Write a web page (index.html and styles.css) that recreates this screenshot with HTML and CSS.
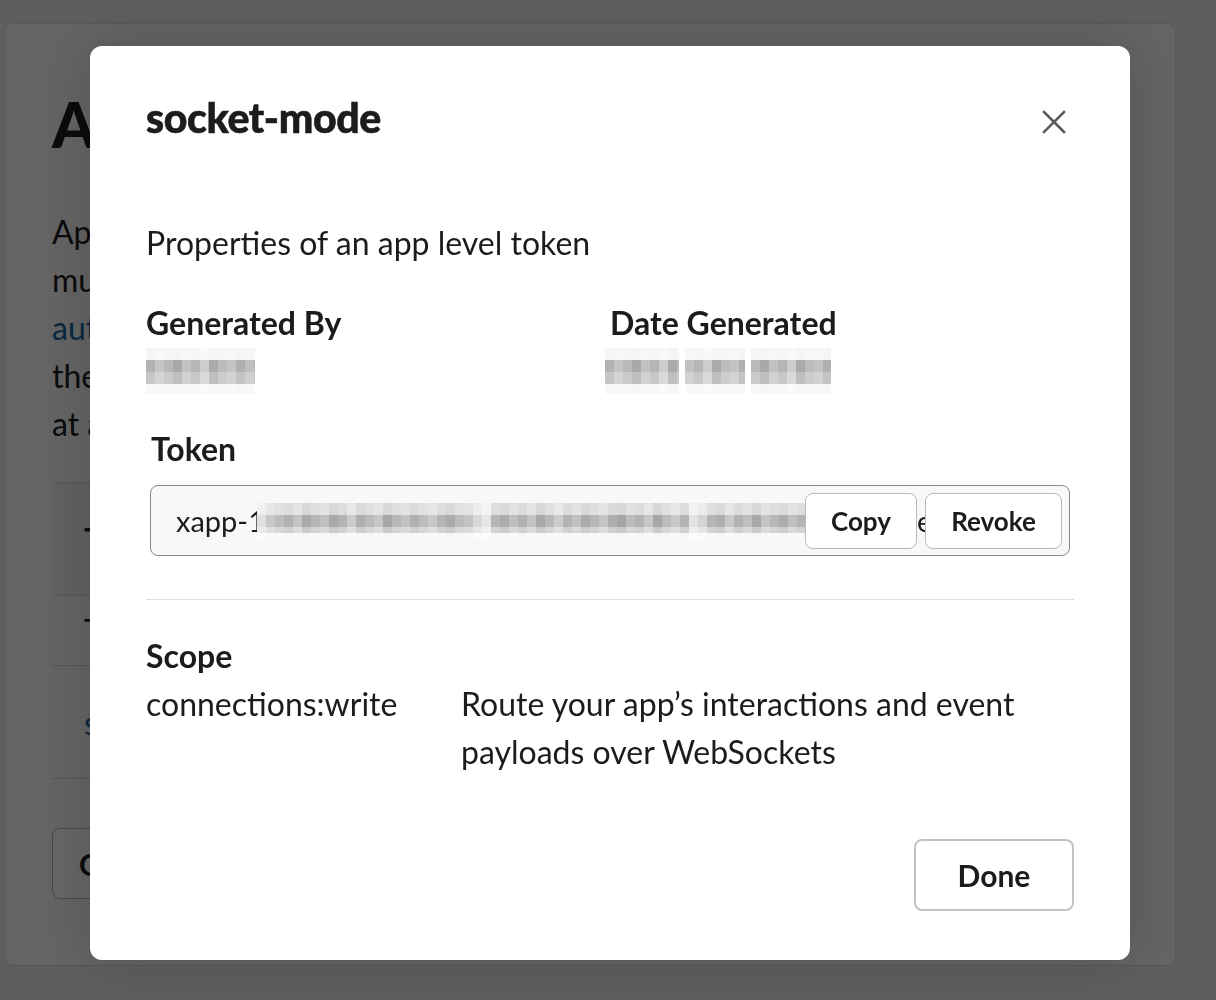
FILE: index.html
```html
<!DOCTYPE html>
<html>
<head>
<meta charset="utf-8">
<link rel="stylesheet" href="styles.css">
</head>
<body>
<div class="page">
  <main class="card">
    <h1 class="page-title">App-Level Tokens</h1>
    <p class="intro">App-level tokens represent your app across<br>multiple workspaces and users. Use them with<br><a href="#">authorized APIs</a> such as Socket Mode and<br>them secret. You can regenerate or revoke<br>at any time from this page.</p>
    <div class="table">
      <div class="row row-head"><span class="cell-strong">Token Name</span></div>
      <div class="row row-mid"><span>Tokens</span></div>
      <div class="row row-link"><a href="#">socket-mode</a></div>
    </div>
    <button class="ghost-btn">Generate Token and Scopes</button>
  </main>
</div>

<div class="overlay">
  <section class="modal">
    <header class="modal-header">
      <h2 class="modal-title">socket-mode</h2>
      <button class="close" aria-label="Close">
        <svg width="24" height="24" viewBox="0 0 24 24"><path d="M2 2 L22 22 M22 2 L2 22" stroke="#5b5b5b" stroke-width="2.6" stroke-linecap="square" fill="none"/></svg>
      </button>
    </header>

    <p class="lead">Properties of an app level token</p>

    <div class="meta">
      <div class="meta-item">
        <div class="label">Generated By</div>
        <div class="blur blur-name"></div>
      </div>
      <div class="meta-item">
        <div class="label">Date Generated</div>
        <div class="blur-date">
          <span class="blur blur-d1"></span><span class="blur blur-d2"></span><span class="blur blur-d3"></span>
        </div>
      </div>
    </div>

    <div class="label token-label">Token</div>
    <div class="token-field">
      <div class="token-text"><span>xapp-1</span><span class="blur-token"></span><span class="token-tail">e</span></div>
      <div class="token-actions">
        <button class="small-btn copy">Copy</button>
        <button class="small-btn revoke">Revoke</button>
      </div>
    </div>

    <hr class="divider">

    <div class="label scope-label">Scope</div>
    <div class="scope-row">
      <div class="scope-name">connections:write</div>
      <div class="scope-desc">Route your app’s interactions and event payloads over WebSockets</div>
    </div>

    <footer class="modal-footer">
      <button class="done">Done</button>
    </footer>
  </section>
</div>
</body>
</html>
```

FILE: styles.css
```css
* { box-sizing: border-box; }
html, body { margin: 0; padding: 0; }
body {
  background: #ebebeb;
  font-family: Lato, "Noto Sans", sans-serif;
  color: #1d1c1d;
  width: 1216px;
  height: 1000px;
  overflow: hidden;
}
.page {
  padding: 23px 40px 0 4px;
}
.card {
  background: #f9f9f9;
  border: 1px solid #dcdcdc;
  border-radius: 9px;
  height: 943px;
  padding: 0 47px;
}
.page-title {
  margin: 64px 0 0;
  font-size: 62px;
  line-height: 72px;
  font-weight: 900;
}
.intro {
  margin: 48px 0 0;
  font-size: 32px;
  line-height: 48px;
}
.intro a, .row-link a { color: #1264a3; text-decoration: none; }
.table {
  margin-top: 34px;
  border-top: 1px solid #d8d8d8;
}
.row {
  border-bottom: 1px solid #d8d8d8;
  font-size: 32px;
  display: flex;
  align-items: center;
  padding-left: 32px;
}
.row-head { height: 113px; background: #f1f1f1; }
.row-mid { height: 70px; }
.row-link { height: 113px; }
.cell-strong { font-weight: 700; }
.ghost-btn {
  margin-top: 49px;
  height: 71px;
  padding: 0 26px;
  border: 1px solid #b0b0b0;
  border-radius: 8px;
  background: #ffffff;
  font: 700 30px Lato, "Noto Sans", sans-serif;
  color: #1d1c1d;
}

.overlay {
  position: fixed;
  inset: 0;
  background: rgba(0, 0, 0, 0.6);
  display: flex;
  align-items: flex-start;
  padding: 46px 0 0 90px;
}
.modal {
  width: 1040px;
  height: 914px;
  background: #ffffff;
  border-radius: 12px;
  box-shadow: 0 0 60px rgba(0, 0, 0, 0.18);
  padding: 0 56px;
  display: flex;
  flex-direction: column;
}
.modal-header {
  display: flex;
  justify-content: space-between;
  align-items: center;
  margin-top: 50px;
  height: 44px;
}
.modal-title {
  margin: 0;
  font-size: 41px;
  line-height: 44px;
  font-weight: 900;
  letter-spacing: -0.4px;
  -webkit-text-stroke: 0.6px #1d1c1d;
}
.close {
  border: 0;
  background: none;
  padding: 0;
  width: 24px;
  height: 24px;
  margin-right: 8px;
  margin-top: 8px;
  display: flex;
}
.lead {
  margin: 79px 0 0;
  font-size: 32px;
  line-height: 48px;
}
.meta {
  margin-top: 32px;
  display: grid;
  grid-template-columns: 1fr 1fr;
}
.label {
  font-size: 32px;
  line-height: 48px;
  font-weight: 700;
}
.blur {
  display: inline-block;
  background:
    linear-gradient(to bottom, rgba(255,255,255,0.88) 0 12px, rgba(255,255,255,0) 12px 24px, rgba(255,255,255,0.25) 24px 36px, rgba(255,255,255,0.9) 36px),
    linear-gradient(to right, #b3b3b3 0 9px, #c6c6c6 9px 18px, #b9b9b9 18px 27px, #a9a9a9 27px 36px, #c2c2c2 36px 45px, #b6b6b6 45px 54px, #cdcdcd 54px 63px, #aaaaaa 63px 72px, #bcbcbc 72px 81px, #c4c4c4 81px 90px, #b0b0b0 90px 99px, #bfbfbf 99px 108px);
  background-size: 100% 100%, 108px 100%;
}
.blur-name {
  width: 109px;
  height: 46px;
  margin-top: 1px;
  display: block;
}
.blur-date {
  display: flex;
  gap: 6px;
  margin-top: 1px;
  margin-left: -5px;
  height: 46px;
}
.blur-d1 { width: 74px; height: 46px; }
.blur-d2 { width: 60px; height: 46px; background-position: 0 0, -36px 0; }
.blur-d3 { width: 80px; height: 46px; background-position: 0 0, -18px 0; }
.token-label {
  margin-top: 31px;
  margin-left: 5px;
}
.token-field {
  position: relative;
  margin-top: 12px;
  margin-left: 4px;
  margin-right: 4px;
  height: 71px;
  border: 1.5px solid #8a8a8a;
  border-radius: 8px;
  background: #f8f8f8;
  overflow: hidden;
  display: flex;
  align-items: center;
  padding-left: 25px;
}
.token-text {
  font-size: 29px;
  line-height: 40px;
  white-space: nowrap;
  display: flex;
  align-items: center;
}
.blur-token {
  display: inline-block;
  width: 555px;
  height: 36px;
  margin-left: -8px;
  background:
    linear-gradient(to bottom, rgba(255,255,255,0.55) 0 12px, rgba(255,255,255,0) 12px 24px, rgba(255,255,255,0.4) 24px 30px, rgba(255,255,255,0.9) 30px),
    linear-gradient(to right,
      #e0e0e0 0 9px, #c9c9c9 9px 18px, #bdbdbd 18px 27px, #b2b2b2 27px 36px, #c4c4c4 36px 45px, #a9a9a9 45px 54px,
      #b7b7b7 54px 63px, #c0c0c0 63px 72px, #a8a8a8 72px 81px, #b3b3b3 81px 90px, #cbcbcb 90px 99px, #aeaeae 99px 108px,
      #bababa 108px 117px, #c6c6c6 117px 126px, #a6a6a6 126px 135px, #b8b8b8 135px 144px, #c2c2c2 144px 153px, #b0b0b0 153px 162px,
      #bdbdbd 162px 171px, #c8c8c8 171px 180px, #b5b5b5 180px 189px, #aaaaaa 189px 198px, #bcbcbc 198px 207px, #c4c4c4 207px 216px,
      #d8d8d8 216px 225px, #e6e6e6 225px 234px, #b6b6b6 234px 243px, #acacac 243px 252px, #bfbfbf 252px 261px, #b1b1b1 261px 270px,
      #c3c3c3 270px 279px, #a9a9a9 279px 288px, #b9b9b9 288px 297px, #cccccc 297px 306px, #b3b3b3 306px 315px, #c1c1c1 315px 324px,
      #ababab 324px 333px, #b8b8b8 333px 342px, #c5c5c5 342px 351px, #afafaf 351px 360px, #a5a5a5 360px 369px, #bcbcbc 369px 378px,
      #b2b2b2 378px 387px, #c7c7c7 387px 396px, #a7a7a7 396px 405px, #bbbbbb 405px 414px, #c9c9c9 414px 423px, #b4b4b4 423px 432px,
      #e2e2e2 432px 441px, #d4d4d4 441px 450px, #b6b6b6 450px 459px, #aeaeae 459px 468px, #c8c8c8 468px 477px, #b1b1b1 477px 486px,
      #bfbfbf 486px 495px, #a8a8a8 495px 504px, #c4c4c4 504px 513px, #b7b7b7 513px 522px, #adadad 522px 531px, #c0c0c0 531px 540px,
      #b4b4b4 540px 549px, #cfcfcf 549px 555px);
}
.token-tail {
  margin-left: 105px;
}
.token-actions {
  position: absolute;
  top: 7px;
  right: 7px;
  display: flex;
  gap: 8px;
}
.small-btn {
  height: 56px;
  border: 1px solid #b9b9b9;
  border-radius: 8px;
  background: #ffffff;
  font: 700 26px Lato, "Noto Sans", sans-serif;
  color: #1d1c1d;
  padding: 0;
}
.copy { width: 112px; }
.revoke { width: 137px; }
.divider {
  margin: 43px 0 0;
  border: 0;
  border-top: 1.5px solid #dddddd;
  height: 0;
}
.scope-label { margin-top: 32px; }
.scope-row {
  display: grid;
  grid-template-columns: 315px 1fr;
  font-size: 32px;
  line-height: 48px;
}
.scope-desc { padding-right: 30px; }
.modal-footer {
  margin-top: 63px;
  display: flex;
  justify-content: flex-end;
}
.done {
  width: 160px;
  height: 72px;
  border: 2px solid #c3c3c3;
  border-radius: 8px;
  background: #ffffff;
  font: 700 30px Lato, "Noto Sans", sans-serif;
  color: #1d1c1d;
  padding: 0;
}
```
